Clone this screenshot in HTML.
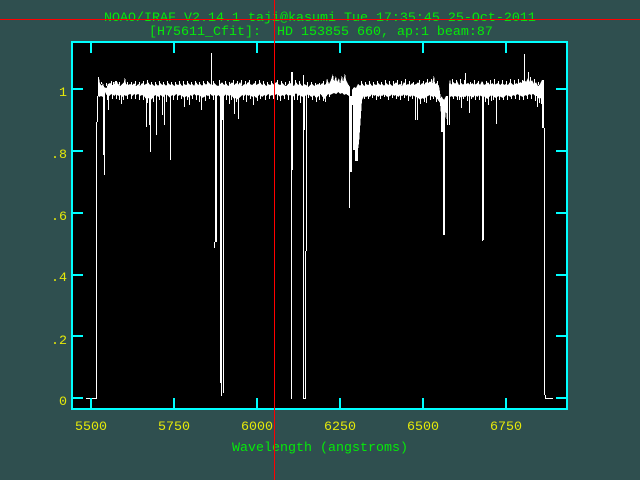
<!DOCTYPE html>
<html><head><meta charset="utf-8"><title>IRAF plot</title>
<style>
html,body{margin:0;padding:0;background:#2f4f4f;width:640px;height:480px;overflow:hidden}
svg{display:block}
text{font-family:"Liberation Mono",monospace;font-size:13.33px;white-space:pre}
.g{fill:#00ff00;fill-opacity:.88}.y{fill:#ffff00;fill-opacity:.88}
</style></head><body>
<svg width="640" height="480" viewBox="0 0 640 480" xmlns="http://www.w3.org/2000/svg">
<rect width="640" height="480" fill="#2f4f4f"/>
<rect x="73" y="43" width="493" height="365" fill="#000"/>
<g shape-rendering="crispEdges">
<polygon fill="#fff" points="98,77 99,78 100,84 102,86 103,83 104,87 106,88 107,87 108,84 110,83 112,85 114,85 115,81 117,81 118,84 120,86 122,84 124,82 125,77 126,84 128,85 130,84 132,85 134,83 136,86 138,84 140,86 142,83 144,85 146,84 148,82 150,85 152,84 154,86 156,84 158,86 160,83 162,85 164,84 166,86 168,83 170,85 172,84 174,86 176,84 178,85 180,83 182,86 184,84 186,85 188,83 190,85 192,84 194,86 196,82 198,85 200,84 202,86 204,83 206,85 208,82 210,84 212,85 214,83 216,85 218,86 220,84 222,82 224,85 226,83 228,86 230,84 232,82 234,85 236,83 238,85 240,82 242,86 244,84 246,85 248,82 250,84 252,85 254,83 256,85 258,84 260,82 262,85 264,83 266,86 268,84 270,85 272,83 274,85 276,82 278,84 280,85 282,83 284,85 286,86 288,84 290,83 292,85 294,86 296,82 298,85 300,83 302,86 304,84 306,85 308,87 310,85 312,84 314,86 316,85 318,84 320,85 322,83 324,85 326,84 327,78 329,84 331,80 333,74 334,82 336,76 337,82 339,78 340,84 342,75 343,82 345,73 346,80 348,84 350,87 350,120 349,96 346,94 344,95 342,93 340,94 338,92 336,94 334,93 332,94 330,95 328,94 326,97 324,99 322,96 320,94 318,97 316,98 314,95 312,97 310,96 308,94 306,96 304,95 302,97 300,95 298,96 296,93 294,96 292,97 290,95 288,96 286,94 284,96 282,95 280,97 278,95 276,94 274,97 272,95 270,96 268,94 266,96 264,95 262,97 260,94 258,96 256,98 254,96 252,97 250,95 248,96 246,94 244,96 242,95 240,97 238,100 236,98 234,99 232,96 230,95 228,96 226,94 224,96 222,95 220,97 218,95 216,97 214,95 212,96 210,94 208,96 206,95 204,97 202,98 200,96 198,95 196,96 194,94 192,96 190,95 188,98 186,96 184,98 182,96 180,95 178,96 176,94 174,96 172,95 170,98 168,96 166,94 164,97 162,96 160,95 158,97 156,95 154,96 152,99 150,100 148,98 146,99 144,96 142,95 140,96 138,94 136,95 134,94 132,96 130,94 128,95 126,96 124,95 122,97 120,95 118,96 116,94 114,96 112,94 110,95 108,97 106,94 105,92 104,92 103,97 101,96 99,97 98,96"/>
<polygon fill="#fff" points="352,90 354,87 356,88 358,84 360,86 362,83 364,86 366,84 368,85 370,83 372,86 374,84 376,85 378,83 380,85 382,84 384,86 386,83 388,85 390,84 392,86 394,84 396,82 398,85 400,84 402,86 404,82 406,85 408,84 410,85 412,83 414,85 416,84 418,82 420,85 422,83 424,85 426,82 428,83 430,81 432,84 434,75 435,84 437,83 439,86 440,92 441,100 441,114 440,103 438,100 436,98 434,96 432,97 430,95 428,96 426,97 424,99 422,98 420,100 418,98 416,97 414,96 412,95 410,97 408,95 406,96 404,94 402,96 400,95 398,97 396,95 394,96 392,94 390,96 388,97 386,96 384,94 382,96 380,95 378,97 376,95 374,96 372,94 370,97 368,96 366,97 364,96 362,100 360,110 358,100 356,96 354,100 352,100"/>
<polygon fill="#fff" points="449,85 450,79 451,85 453,82 455,84 457,81 459,85 461,83 463,85 465,82 466,84 468,83 470,85 472,83 474,85 476,84 478,82 480,85 482,81 484,85 486,84 488,82 490,85 492,83 494,85 496,84 498,83 500,85 502,83 504,85 506,84 508,85 510,82 512,84 514,85 516,83 518,84 520,82 522,83 524,80 526,82 528,78 530,82 532,80 534,84 536,82 538,86 540,84 542,80 543,80 543,100 541,98 539,99 537,96 535,96 533,94 531,95 529,94 527,96 525,95 523,97 521,96 519,95 517,94 515,96 513,95 511,97 509,96 507,95 505,96 503,98 501,97 499,96 497,97 495,98 493,96 491,95 489,97 487,99 485,96 483,98 481,96 479,95 477,97 475,95 473,98 471,96 469,97 467,95 465,97 463,96 461,98 459,96 457,97 455,96 453,97 451,96 449,98"/>
<polygon fill="#fff" points="441,96 444,100 446,96 448,96 448,112 447,122 446,110 445,120 445,132 441,132"/>
<polygon fill="#fff" points="350,92 352,92 352,105 353,105 353,150 355,150 355,161 358,161 358,150 359,143 360,129 361,115 362,100 360,92 352,92"/>
<path fill="none" stroke="#fff" stroke-width="1" d="M86 398.5H96.5V122M97.5 122V96M98.5 96V77M103.5 90V155M104.5 90V175M108.5 95V110M121.5 95V104M146.5 95V127M149.5 95V125M150.5 95V152M156.5 95V135M162.5 95V115M164.5 95V125M170.5 95V160M184.5 95V107M189.5 95V105M201.5 95V110M234.5 95V114M238.5 95V119M253.5 95V105M211.5 53V90M215.5 90V242M216.5 90V242M214.5 242V248M220.5 90V383M221.5 90V396M223.5 90V393M222.5 90V120M291.5 72V399M292.5 72V170M303.5 75V398.5H305.5V251M304.5 90V130M306.5 90V251M349.5 96V208M350.5 96V172M351.5 96V172M417.5 95V120M415.5 95V120M443.5 130V235M444.5 110V235M442.5 100V132M447.5 100V125M449.5 96V125M461.5 95V108M465.5 73V90M469.5 95V113M482.5 82V241M483.5 95V240M488.5 95V105M496.5 95V124M524.5 54V90M528.5 72V90M537.5 95V107M542.5 80V128M543.5 80V128M544.5 128V395M545.5 395V398.5H553
M101.5 84V82M106.5 86V83M111.5 85V81M113.5 85V82M119.5 85V82M127.5 85V82M131.5 85V82M135.5 85V81M139.5 85V82M143.5 85V81M147.5 85V80M151.5 85V82M155.5 85V82M159.5 85V81M163.5 85V82M167.5 85V81M171.5 85V82M175.5 85V82M179.5 85V81M183.5 85V81M187.5 85V81M191.5 85V82M195.5 85V81M199.5 85V82M203.5 85V81M207.5 85V81M213.5 85V81M219.5 85V80M225.5 85V81M229.5 85V82M233.5 85V80M237.5 85V81M241.5 85V80M245.5 85V81M249.5 85V80M255.5 85V81M259.5 85V80M263.5 85V81M267.5 85V82M271.5 85V81M277.5 85V80M281.5 85V81M285.5 85V82M289.5 85V81M295.5 85V80M299.5 85V81M307.5 87V82M311.5 87V82M315.5 87V83M319.5 87V83M323.5 87V81M361.5 85V81M365.5 85V82M369.5 85V81M373.5 85V82M377.5 85V81M381.5 85V82M385.5 85V80M389.5 85V81M393.5 85V81M397.5 85V80M401.5 85V81M405.5 85V79M409.5 85V81M413.5 85V82M419.5 85V80M423.5 85V81M427.5 85V79M431.5 85V79M437.5 85V81M452.5 85V79M456.5 85V80M460.5 85V79M464.5 85V80M470.5 85V82M474.5 85V80M478.5 85V81M486.5 85V81M490.5 85V80M494.5 85V79M498.5 85V81M502.5 85V80M506.5 85V81M510.5 85V79M514.5 85V80M518.5 85V79M522.5 85V80M530.5 85V77M534.5 85V79M538.5 85V82
M107.5 94V100M112.5 94V99M116.5 94V99M119.5 94V100M123.5 94V100M127.5 94V99M131.5 94V99M135.5 94V99M139.5 94V100M143.5 94V100M147.5 94V103M153.5 94V102M159.5 94V100M166.5 94V102M173.5 94V100M177.5 94V100M181.5 94V99M187.5 94V100M192.5 94V99M196.5 94V100M199.5 94V102M205.5 94V101M209.5 94V99M213.5 94V100M226.5 94V100M229.5 94V104M231.5 94V100M236.5 94V102M243.5 94V100M246.5 94V102M250.5 94V99M257.5 94V101M260.5 94V99M265.5 94V100M269.5 94V99M273.5 94V99M277.5 94V100M280.5 94V101M284.5 94V99M288.5 94V100M294.5 94V100M297.5 94V100M300.5 94V103M308.5 94V98M312.5 94V100M316.5 94V102M319.5 94V100M323.5 94V101M325.5 94V102M329.5 94V97M364.5 94V99M368.5 94V99M372.5 94V98M376.5 94V100M380.5 94V99M384.5 94V97M388.5 94V100M392.5 94V98M396.5 94V99M400.5 94V100M404.5 94V98M408.5 94V101M412.5 94V99M420.5 94V104M424.5 94V102M426.5 94V103M430.5 94V100M433.5 94V99M436.5 94V102M453.5 94V99M457.5 94V100M459.5 94V100M463.5 94V99M467.5 94V101M471.5 94V99M475.5 94V100M479.5 94V100M485.5 94V102M491.5 94V101M493.5 94V100M499.5 94V100M503.5 94V100M507.5 94V100M511.5 94V99M515.5 94V99M519.5 94V100M523.5 94V100M527.5 94V99M531.5 94V99M535.5 94V101M539.5 94V103M541.5 94V104"/>
<path fill="#00ffff" d="M71 41H568V43H71ZM71 43H73V410H71ZM566 43H568V410H566ZM71 408H568V410H71Z
M90 43h2v10h-2ZM173 43h2v10h-2ZM256 43h2v10h-2ZM339 43h2v10h-2ZM422 43h2v10h-2ZM505 43h2v10h-2Z
M90 398h2v10h-2ZM173 398h2v10h-2ZM256 398h2v10h-2ZM339 398h2v10h-2ZM422 398h2v10h-2ZM505 398h2v10h-2Z
M73 88h10v2h-10ZM73 150h10v2h-10ZM73 212h10v2h-10ZM73 274h10v2h-10ZM73 335h10v2h-10ZM73 397h10v2h-10Z
M556 88h10v2h-10ZM556 150h10v2h-10ZM556 212h10v2h-10ZM556 274h10v2h-10ZM556 335h10v2h-10ZM556 397h10v2h-10Z"/>
</g>
<text class="g" x="104" y="21">NOAO/IRAF V2.14.1 taji@kasumi Tue 17:35:45 25-Oct-2011</text>
<text class="g" x="149" y="35">[H75611_Cfit]:  HD 153855 660, ap:1 beam:87</text>
<text class="g" x="232" y="451">Wavelength (angstroms)</text>
<text class="y" x="75" y="430">5500</text>
<text class="y" x="158" y="430">5750</text>
<text class="y" x="241" y="430">6000</text>
<text class="y" x="324" y="430">6250</text>
<text class="y" x="407" y="430">6500</text>
<text class="y" x="490" y="430">6750</text>
<text class="y" x="59" y="96">1</text>
<text class="y" x="51" y="158">.8</text>
<text class="y" x="51" y="220">.6</text>
<text class="y" x="51" y="281">.4</text>
<text class="y" x="51" y="344">.2</text>
<text class="y" x="59" y="405">0</text>
<g shape-rendering="crispEdges" fill="#ff0000">
<rect x="0" y="19" width="640" height="1"/>
<rect x="274" y="0" width="1" height="480"/>
</g>
</svg>
</body></html>
